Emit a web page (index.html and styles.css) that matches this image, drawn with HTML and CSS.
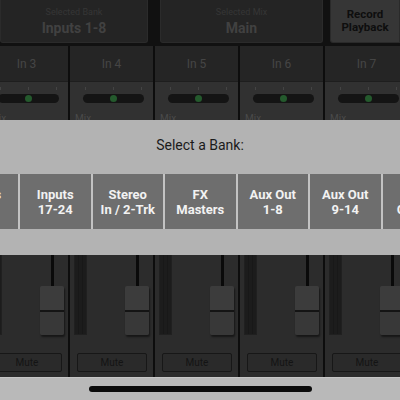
FILE: index.html
```html
<!DOCTYPE html>
<html lang="en">
<head>
  <meta charset="UTF-8" />
  <title>Mixer - Select a Bank</title>
  <link rel="stylesheet" href="styles.css">
</head>
<body>
  <div class="screen">
    <header class="topbar">
      <div class="card card-bank">
        <span class="card-label">Selected Bank</span>
        <span class="card-value">Inputs 1-8</span>
      </div>
      <div class="card card-mix">
        <span class="card-label">Selected Mix</span>
        <span class="card-value">Main</span>
      </div>
      <button class="record">Record<br>Playback</button>
    </header>

    <!-- Channel strips -->
    <main class="mixer">
      <div class="strip">
        <div class="strip-head">In 3</div>
        <div class="pan">
          <div class="ticks"><i></i><i></i><i></i></div>
          <div class="pan-bar"><span class="pan-dot"></span></div>
          <span class="mix-label">Mix</span>
        </div>
        <div class="fader-area">
          <div class="meter"></div>
          <div class="fader"><span class="track"></span><span class="cap"></span></div>
        </div>
        <div class="mute-row"><button class="mute">Mute</button></div>
      </div>
      <div class="strip">
        <div class="strip-head">In 4</div>
        <div class="pan">
          <div class="ticks"><i></i><i></i><i></i></div>
          <div class="pan-bar"><span class="pan-dot"></span></div>
          <span class="mix-label">Mix</span>
        </div>
        <div class="fader-area">
          <div class="meter"></div>
          <div class="fader"><span class="track"></span><span class="cap"></span></div>
        </div>
        <div class="mute-row"><button class="mute">Mute</button></div>
      </div>
      <div class="strip">
        <div class="strip-head">In 5</div>
        <div class="pan">
          <div class="ticks"><i></i><i></i><i></i></div>
          <div class="pan-bar"><span class="pan-dot"></span></div>
          <span class="mix-label">Mix</span>
        </div>
        <div class="fader-area">
          <div class="meter"></div>
          <div class="fader"><span class="track"></span><span class="cap"></span></div>
        </div>
        <div class="mute-row"><button class="mute">Mute</button></div>
      </div>
      <div class="strip">
        <div class="strip-head">In 6</div>
        <div class="pan">
          <div class="ticks"><i></i><i></i><i></i></div>
          <div class="pan-bar"><span class="pan-dot"></span></div>
          <span class="mix-label">Mix</span>
        </div>
        <div class="fader-area">
          <div class="meter"></div>
          <div class="fader"><span class="track"></span><span class="cap"></span></div>
        </div>
        <div class="mute-row"><button class="mute">Mute</button></div>
      </div>
      <div class="strip">
        <div class="strip-head">In 7</div>
        <div class="pan">
          <div class="ticks"><i></i><i></i><i></i></div>
          <div class="pan-bar"><span class="pan-dot"></span></div>
          <span class="mix-label">Mix</span>
        </div>
        <div class="fader-area">
          <div class="meter"></div>
          <div class="fader"><span class="track"></span><span class="cap"></span></div>
        </div>
        <div class="mute-row"><button class="mute">Mute</button></div>
      </div>
    </main>

    <footer class="home"><span class="home-bar"></span></footer>

    <!-- Bank selector -->
    <section class="bank-panel">
      <p class="bank-title">Select a Bank:</p>
      <div class="bank-row">
        <button class="bank-btn">Inputs<br>9-16</button>
        <button class="bank-btn">Inputs<br>17-24</button>
        <button class="bank-btn">Stereo<br>In / 2-Trk</button>
        <button class="bank-btn">FX<br>Masters</button>
        <button class="bank-btn">Aux Out<br>1-8</button>
        <button class="bank-btn">Aux Out<br>9-14</button>
        <button class="bank-btn">DCA<br>Groups</button>
      </div>
    </section>
  </div>
</body>
</html>
```

FILE: styles.css
```css
* {
  box-sizing: border-box;
  margin: 0;
  padding: 0;
}

body {
  font-family: Roboto, 'Liberation Sans', sans-serif;
  background: #121212;
}

.screen {
  position: relative;
  width: 400px;
  height: 400px;
  overflow: hidden;
  display: flex;
  flex-direction: column;
}

/* Top bar */
.topbar {
  height: 46px;
  display: flex;
  background: #111;
  padding-bottom: 3px;
}

.card {
  background: #242424;
  border: 1px solid #2b2b2b;
  border-top: none;
  border-radius: 0 0 3px 3px;
  display: flex;
  flex-direction: column;
  align-items: center;
  justify-content: center;
  gap: 3px;
}

.card-bank {
  width: 148px;
  margin-right: 12px;
}

.card-mix {
  width: 163px;
  margin-right: 7px;
}

.card-label {
  font-size: 9px;
  color: #363636;
}

.card-value {
  font-size: 14px;
  font-weight: bold;
  color: #414141;
}

.record {
  width: 70px;
  background: #363636;
  border: 1px solid #2a2a2a;
  border-top: none;
  border-radius: 0 0 0 3px;
  font-family: inherit;
  font-size: 11.5px;
  font-weight: bold;
  line-height: 13px;
  color: #0e0e0e;
}

/* Channel strips */
.mixer {
  height: 331px;
  display: flex;
  margin-left: -15px;
}

.strip {
  flex: 0 0 85px;
  display: flex;
  flex-direction: column;
  background: #2c2c2c;
  border-right: 2px solid #0d0d0d;
}

.strip-head {
  height: 36px;
  background: #252525;
  border-bottom: 1px solid #1e1e1e;
  display: flex;
  align-items: center;
  justify-content: center;
  font-size: 12px;
  color: #454545;
}

.pan {
  height: 40px;
  background: #313131;
  padding: 5px 0 0 13px;
  position: relative;
}

.ticks {
  width: 61px;
  height: 3px;
  display: flex;
  justify-content: space-between;
  padding: 0 2px;
}

.ticks i {
  width: 1px;
  height: 3px;
  background: #444;
}

.pan-bar {
  margin-top: 4px;
  width: 61px;
  height: 9px;
  border-radius: 5px;
  background: #141414;
  display: flex;
  justify-content: center;
  align-items: center;
}

.pan-dot {
  width: 7px;
  height: 7px;
  border-radius: 50%;
  background: #245a2d;
}

.mix-label {
  position: absolute;
  left: 5px;
  top: 31px;
  font-size: 10px;
  color: #4a4a4a;
}

.fader-area {
  flex: 1;
  display: flex;
  align-items: flex-end;
  padding: 0 4px 10px 4px;
}

.meter {
  width: 13px;
  height: 170px;
  background: repeating-linear-gradient(90deg, #1c1c1c 0 3px, #181818 3px 4px);
  border: 1px solid #202020;
}

.fader {
  margin-left: auto;
  width: 24px;
  height: 100%;
  display: flex;
  flex-direction: column;
  align-items: center;
}

.track {
  flex: 1;
  width: 3px;
  background: #0a0a0a;
}

.cap {
  width: 24px;
  height: 49px;
  border-radius: 2px;
  background: linear-gradient(#3c3c3c 0 24px, #141414 24px 26px, #383838 26px);
  box-shadow: 1px 2px 2px rgba(0, 0, 0, 0.5);
}

.mute-row {
  height: 32px;
  padding: 6px 6px 0 7px;
}

.mute {
  width: 70px;
  height: 19px;
  background: #2a2a2a;
  border: 1px solid #171717;
  border-radius: 2px;
  font-family: inherit;
  font-size: 10px;
  color: #141414;
}

/* Home indicator */
.home {
  flex: 1;
  background: #b9b9b9;
  border-top: 1px solid #c6c6c6;
  display: flex;
  justify-content: center;
  padding-top: 8px;
}

.home-bar {
  width: 223px;
  height: 6px;
  border-radius: 3px;
  background: #0b0b0b;
}

/* Bank selector panel */
.bank-panel {
  position: absolute;
  top: 120px;
  left: 0;
  width: 400px;
  height: 135px;
  background: #b3b3b3;
  padding-top: 16px;
}

.bank-title {
  text-align: center;
  font-size: 14px;
  line-height: 18px;
  color: #1b1b1b;
}

.bank-row {
  margin-top: 20px;
  margin-left: -52.5px;
  display: flex;
  gap: 2px;
  background: #c3c3c3;
}

.bank-btn {
  flex: 0 0 70.5px;
  height: 55px;
  background: #6e6e6e;
  border: none;
  font-family: inherit;
  font-size: 13px;
  font-weight: bold;
  line-height: 15px;
  color: #f2f2f2;
}
```
